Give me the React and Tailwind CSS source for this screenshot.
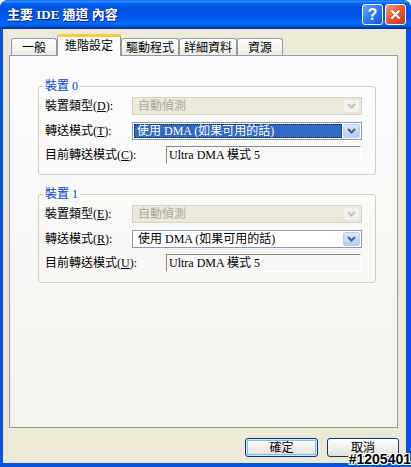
import React from 'react';

const font = "font-['Liberation_Serif','Noto_Sans_CJK_TC',serif]";

const Chevron = ({ color }) => (
  <svg width="9" height="6" viewBox="0 0 9 6">
    <path d="M1 1 L4.5 4.5 L8 1" fill="none" stroke={color} strokeWidth="2" />
  </svg>
);

const Hot = ({ text, k }) => (
  <span className="whitespace-nowrap">
    {text}(<u>{k}</u>):
  </span>
);

const Combo = ({ value, disabled, focused }) => (
  <div
    className={`flex h-[18px] w-[230px] border p-px ${
      disabled ? 'border-[#d6d3c6] bg-[#ebe9da]' : 'border-[#7f9db9] bg-white'
    }`}
  >
    <div className="flex flex-1 items-center pr-px">
      {focused ? (
        <div className="flex h-full w-full items-center border border-dotted border-[#1a1a1a] bg-[#316ac5] pl-[2px] text-white">
          {value}
        </div>
      ) : (
        <div className={`pl-[4px] ${disabled ? 'text-[#aca899]' : 'text-black'}`}>{value}</div>
      )}
    </div>
    <div
      className={`flex w-[17px] items-center justify-center rounded-[2px] border ${
        disabled
          ? 'border-[#e9e7dd] bg-[#f3f2ec]'
          : 'border-[#bdcff7] bg-linear-to-b from-[#dde7fd] to-[#b5c9f6]'
      }`}
    >
      <Chevron color={disabled ? '#c9c7ba' : '#4d6185'} />
    </div>
  </div>
);

const Device = ({ n, keys, focused, className }) => (
  <fieldset className={`w-[338px] rounded-[3px] border border-[#d0d0bf] px-[6px] pb-[10px] ${className}`}>
    <legend className="-ml-[2px] px-[2px] text-[12px] leading-[12px] text-[#0046d5]">裝置 {n}</legend>
    <div className="mt-[5px] flex items-center">
      <div className="w-[87px]">
        <Hot text="裝置類型" k={keys[0]} />
      </div>
      <Combo value="自動偵測" disabled />
    </div>
    <div className="mt-[7px] flex items-center">
      <div className="w-[87px]">
        <Hot text="轉送模式" k={keys[1]} />
      </div>
      <Combo value="使用 DMA (如果可用的話)" focused={focused} />
    </div>
    <div className="mt-[6px] flex items-center">
      <div className="w-[121px]">
        <Hot text="目前轉送模式" k={keys[2]} />
      </div>
      <div className="flex h-[18px] w-[195px] items-center border-t border-l border-t-[#8a8880] border-l-[#8a8880] border-b border-r border-b-white border-r-white pl-[2px]">
        Ultra DMA 模式 5
      </div>
    </div>
  </fieldset>
);

const tabs = [
  { label: '一般', w: 'w-[46px]' },
  { label: '進階設定', w: 'w-[64px]', active: true },
  { label: '驅動程式', w: 'w-[58px]' },
  { label: '詳細資料', w: 'w-[58px]' },
  { label: '資源', w: 'w-[46px]' },
];

export default function App() {
  return (
    <div className={`relative flex h-[467px] w-[411px] flex-col overflow-hidden rounded-t-[8px] bg-[#0553e2] text-[12px] leading-[14px] text-black ${font}`}>
      <div className="flex h-[29px] items-center bg-[linear-gradient(to_bottom,#0058ee_0%,#3a93ff_4%,#288eff_6%,#127dff_8%,#036ffc_10%,#0262ee_14%,#0057e5_20%,#0054e3_24%,#0055eb_56%,#005bf5_66%,#026afe_76%,#0062ef_86%,#0052d6_92%,#0040ab_94%,#003092_100%)] pl-[7px] pr-[5px]">
        <div className="flex-1 text-[13px] leading-[16px] font-bold text-white [text-shadow:1px_1px_0_#0a1883]">
          主要 IDE 通道 內容
        </div>
        <div className="flex gap-[2px]">
          <div className="flex h-[21px] w-[21px] items-center justify-center rounded-[3px] border border-white bg-linear-to-br from-[#63a4ff] via-[#2f7af5] to-[#1550d8] font-['Liberation_Sans',sans-serif] text-[16px] font-bold text-white">
            ?
          </div>
          <div className="flex h-[21px] w-[21px] items-center justify-center rounded-[3px] border border-white bg-linear-to-br from-[#f0a080] via-[#e2592f] to-[#c13a16]">
            <svg width="11" height="11" viewBox="0 0 11 11">
              <path d="M1.5 1.5 L9.5 9.5 M9.5 1.5 L1.5 9.5" stroke="#fff" strokeWidth="2" />
            </svg>
          </div>
        </div>
      </div>

      <div className="mb-[4px] ml-[3px] mr-[5px] flex flex-1 flex-col bg-[#ece9d8] pt-[5px]">
        <div className="ml-[6px] mr-[8px]">
          <div className="flex h-[21px] items-end pl-[2px]">
            {tabs.map((t) =>
              t.active ? (
                <div
                  key={t.label}
                  className={`relative z-10 -mb-px flex h-[22px] ${t.w} items-start justify-center rounded-t-[3px] border-x border-t-[3px] border-x-[#919b9c] border-t-[#ffc73c] bg-[#fcfcfe] pt-[2px] text-[12px]`}
                >
                  {t.label}
                </div>
              ) : (
                <div
                  key={t.label}
                  className={`flex h-[17px] ${t.w} items-center justify-center rounded-t-[3px] border-x border-t border-[#919b9c] bg-linear-to-b from-white to-[#ecebe5] pt-px`}
                >
                  {t.label}
                </div>
              )
            )}
          </div>
          <div className="h-[373px] border border-[#919b9c] bg-linear-to-b from-[#fcfcfe] to-[#f4f3ee] pt-[24px] pl-[28px]">
            <Device n="0" keys={['D', 'T', 'C']} focused />
            <Device n="1" keys={['E', 'R', 'U']} className="mt-[13px]" />
          </div>
        </div>

        <div className="mt-[10px] mr-[7px] flex justify-end gap-[9px]">
          <div className="flex h-[19px] w-[73px] items-center justify-center rounded-[3px] border border-[#003c74] bg-linear-to-b from-white to-[#e3e1d8] shadow-[inset_0_0_0_1px_#cee7ff,inset_0_0_0_2px_#8fb1ec]">
            確定
          </div>
          <div className="flex h-[19px] w-[72px] items-center justify-center rounded-[3px] border border-[#003c74] bg-linear-to-b from-white to-[#e3e1d8]">
            取消
          </div>
        </div>
      </div>

      <div className="absolute right-0 bottom-0 font-['Liberation_Sans',sans-serif] text-[14px] leading-[15px] font-bold text-black [text-shadow:1px_1px_0_#fff,-1px_-1px_0_#fff,1px_-1px_0_#fff,-1px_1px_0_#fff,0_1px_0_#fff,0_-1px_0_#fff,1px_0_0_#fff,-1px_0_0_#fff]">
        #1205401
      </div>
    </div>
  );
}
